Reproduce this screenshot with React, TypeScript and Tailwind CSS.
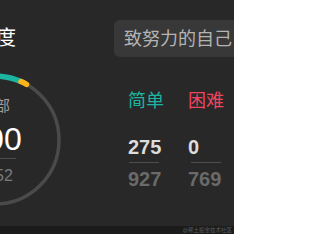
import React from "react";

const font = {
  fontFamily: '"Liberation Sans", "Noto Sans CJK SC", sans-serif',
};

// arc along circle center (70,70) r=64, angles in degrees clockwise from top
const arcPath = (a0: number, a1: number, r = 64) => {
  const p = (a: number) => {
    const rad = (a * Math.PI) / 180;
    return [70 + r * Math.sin(rad), 70 - r * Math.cos(rad)];
  };
  const [x0, y0] = p(a0);
  const [x1, y1] = p(a1);
  const large = a1 - a0 > 180 ? 1 : 0;
  return `M ${x0} ${y0} A ${r} ${r} 0 ${large} 1 ${x1} ${y1}`;
};

const ProgressRing = () => {
  return (
    <div className="relative w-[140px] h-[140px] shrink-0">
      <svg width="140" height="140" viewBox="0 0 140 140" className="block">
        <circle cx="70" cy="70" r="64" fill="none" stroke="#4a4a4a" strokeWidth="3.5" />
        <path d={arcPath(0, 24)} fill="none" stroke="#1bb5a2" strokeWidth="5.5" strokeLinecap="round" />
        <path d={arcPath(24, 29.5)} fill="none" stroke="#fbb51a" strokeWidth="5.5" strokeLinecap="round" />
      </svg>
      <div className="absolute inset-0 flex flex-col items-center justify-center pt-[2px]">
        <span className="text-[15px] leading-[15px] text-[#9e9e9e]">全部</span>
        <span className="mt-[10px] text-[32px] leading-[32px] text-white">300</span>
        <div className="mt-[3px] w-[42px] h-px bg-[#4c4c4c]" />
        <span className="mt-[9px] text-[16px] leading-[16px] text-[#7a7a7a]">3252</span>
      </div>
    </div>
  );
};

const Stat = ({
  label,
  color,
  solved,
  total,
  lineOffset,
  width,
}: {
  label: string;
  color: string;
  solved: string;
  total: string;
  lineOffset: string;
  width: string;
}) => {
  return (
    <div className={`flex flex-col ${width}`}>
      <span className={`text-[18px] leading-[18px] ${color}`}>{label}</span>
      <span className="mt-[27px] text-[20px] leading-[20px] font-bold text-[#dcdcdc]">{solved}</span>
      <div className={`mt-[5px] w-[30px] h-px bg-[#4e4e4e] ${lineOffset}`} />
      <span className="mt-[6px] text-[20px] leading-[20px] font-bold text-[#6a6a6a]">{total}</span>
    </div>
  );
};

export default function App() {
  return (
    <div
      className="w-[234px] h-[234px] overflow-hidden bg-[#282828] flex flex-col"
      style={font}
    >
      <div className="flex h-[226px] shrink-0">
        <div className="-ml-[75px] w-[140px] shrink-0 flex flex-col pt-[27px]">
          <h2 className="pl-[51px] text-[20px] leading-[22px] text-white font-normal">进度</h2>
          <div className="mt-[21px]">
            <ProgressRing />
          </div>
        </div>
        <div className="flex flex-col pt-[20px] shrink-0">
          <div className="ml-[49px] w-[150px] h-[37px] rounded-md bg-[#383838] flex items-center pl-[10px]">
            <span className="text-[18px] leading-[18px] text-[#b4b4b4] whitespace-nowrap">
              致努力的自己
            </span>
          </div>
          <div className="ml-[63px] mt-[35px] flex">
            <Stat
              label="简单"
              color="text-[#1bb5a2]"
              solved="275"
              total="927"
              lineOffset="ml-[1px]"
              width="w-[60px]"
            />
            <Stat
              label="困难"
              color="text-[#ef4660]"
              solved="0"
              total="769"
              lineOffset="ml-[3px]"
              width="w-[50px]"
            />
          </div>
        </div>
      </div>
      <div className="flex-1 bg-[#1b1b1b] flex items-center justify-end pr-[2px]">
        <span className="text-[5.5px] leading-[6px] text-[#5a5a5a] whitespace-nowrap">
          @稀土掘金技术社区
        </span>
      </div>
    </div>
  );
}
